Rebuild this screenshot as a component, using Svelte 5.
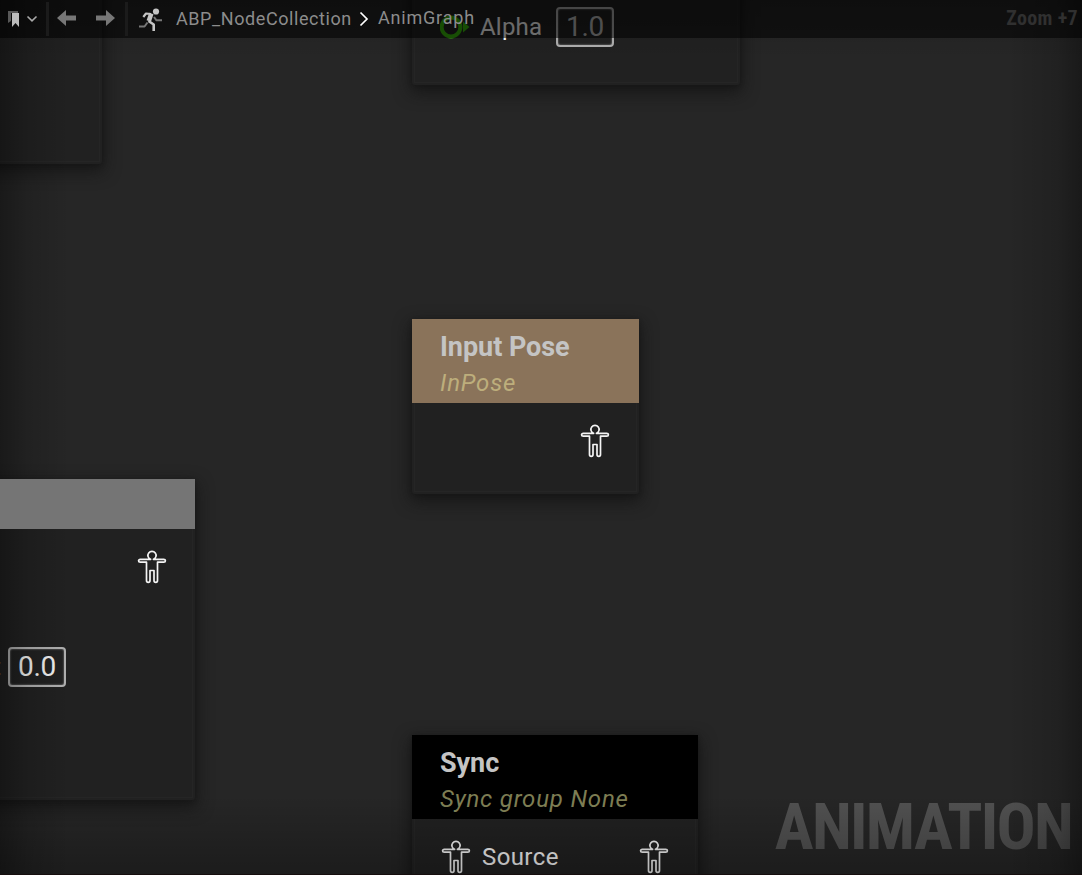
<script>
  const nodes = [
    { id: 'clip', x: -40, y: -40, w: 142, h: 204 },
    { id: 'alpha', x: 412, y: -80, w: 328, h: 165 },
    { id: 'pose', x: 412, y: 319, w: 227, h: 175, title: 'Input Pose', sub: 'InPose', tone: 'tan' },
    { id: 'gray', x: -60, y: 479, w: 255, h: 321, tone: 'gray' },
    { id: 'sync', x: 412, y: 735, w: 286, h: 180, title: 'Sync', sub: 'Sync group None', tone: 'black' }
  ];
</script>

{#snippet man()}
  <svg class="man" width="30" height="34" viewBox="0 0 30 34" fill="none" stroke="#f4f4f4" stroke-width="1.7" stroke-linejoin="round">
    <path d="M13.6 9.300A4.100 4.100 0 1 1 16.400 9.300H26.700C29 9.300 29 12.200 26.700 12.200H20.500V30.500C20.500 32.900 17 32.900 17 30.500V20.500H13V30.500C13 32.900 9.500 32.900 9.500 30.500V12.200H3.300C1 12.200 1 9.300 3.300 9.300Z" />
  </svg>
{/snippet}

<main>
  {#each nodes as n (n.id)}
    <section class="node" style="left:{n.x}px;top:{n.y}px;width:{n.w}px;height:{n.h}px">
      {#if n.tone}
        <header class={n.tone}>
          {#if n.title}
            <h2>{n.title}</h2>
            <p class={n.id}>{n.sub}</p>
          {/if}
        </header>
      {/if}
      {#if n.id === 'alpha'}
        <div class="row alpharow">
          <svg width="30" height="24" viewBox="0 0 30 24"><circle cx="11" cy="12" r="9.4" fill="none" stroke="#38b80c" stroke-width="4" /><path d="M23 6.500l6.500 5.500-6.500 5.500z" fill="#38b80c" /></svg>
          <span class="label">Alpha</span><span class="value">1.0</span>
        </div>
      {:else if n.id === 'pose'}
        <div class="row end">{@render man()}</div>
      {:else if n.id === 'gray'}
        <div class="row end near">{@render man()}</div>
        <div class="row zero"><span class="label">t</span><span class="value">0.0</span></div>
      {:else if n.id === 'sync'}
        <div class="row source">{@render man()}<span class="label">Source</span><i></i>{@render man()}</div>
      {/if}
    </section>
  {/each}

  <div class="watermark">ANIMATION</div>
  <div class="vignette"></div>

  <nav>
    <svg class="tools" width="170" height="38" viewBox="0 0 170 38">
      <path d="M8 11h10v2h-7v8l-3 2z" fill="#585858" />
      <path d="M12 13h7v14l-3.500-4-3.500 4z" fill="#bcbcbc" />
      <path d="M27.500 16.500l4.500 4.300 4.500-4.300" fill="none" stroke="#aaa" stroke-width="1.600" />
      <path d="M46 2h3v34h-3zM125 2h3v34h-3z" fill="#1b1b1b" />
      <path d="M57 18l9-8v5.500h10v5H66V26zM115 18l-9-8v5.500H96v5h10V26z" fill="#777" />
      <g fill="none" stroke-linejoin="round">
        <path d="M139 26.500h5.500l3-4M154 17l2.500 3.300h5.500" stroke="#777" stroke-width="2" />
        <path d="M143.300 17l2.700-3.500 5 .5" stroke="#c5c5c5" stroke-width="2.200" />
        <path d="M151.300 13.500l-2.500 7.500" stroke="#c5c5c5" stroke-width="4.600" />
        <path d="M148.500 21l5.200 3.500v6.500" stroke="#c5c5c5" stroke-width="2.600" />
      </g>
      <circle cx="156" cy="11.500" r="3.100" fill="#c5c5c5" />
    </svg>
    <span class="crumb one">ABP_NodeCollection</span>
    <svg class="sep" width="12" height="16" viewBox="0 0 12 16"><path d="M2.500 1.500l6.500 6.500-6.500 6.500" fill="none" stroke="#fff" stroke-width="1.700" /></svg>
    <span class="crumb two">AnimGraph</span>
    <span class="zoom">Zoom +7</span>
  </nav>
</main>

<style>
  :global(body) { margin: 0; background: #262626; }
  main { position: relative; width: 1082px; height: 875px; overflow: hidden; background: #262626; font-family: Roboto, sans-serif; }
  h2, p { margin: 0; font-weight: 400; white-space: nowrap; }
  svg { display: block; flex: none; }
  .node { position: absolute; box-sizing: border-box; background: #212121; box-shadow: 0 6px 16px 2px #111a, 0 1px 4px #1116; border-radius: 3px; }
  .node::after { content: ''; position: absolute; inset: 0 2px 2px; border: 1px solid #ffffff05; z-index: 0; }
  header { position: relative; z-index: 1; box-sizing: border-box; height: 84px; padding: 11px 28px 0; }
  .tan { background: #8a735a; }
  .gray { background: #757575; height: 50px; }
  .black { background: #000; }
  h2 { font-size: 27px; line-height: 34px; font-weight: 700; letter-spacing: -.05px; color: #c4c4c4; }
  p { margin-top: 1px; font-size: 24px; line-height: 36px; font-style: italic; letter-spacing: .8px; color: #bdae7c; }
  p.sync { color: #7d7d53; }
  .row { display: flex; align-items: center; }
  .end { justify-content: flex-end; padding: 21px 29px 0 0; }
  .near { padding-right: 28px; }
  .label { font-size: 24px; line-height: 30px; letter-spacing: .4px; color: #e8e8e8; }
  .value { box-sizing: border-box; width: 58px; height: 40px; border: 2px solid #b0b0b0; border-radius: 4px; font-size: 28px; line-height: 35px; letter-spacing: -.3px; text-align: center; color: #f0f0f0; box-shadow: inset 0 0 2px #999; }
  .alpharow { padding: 87px 0 0 28px; }
  .alpharow .label { width: 76px; margin-left: 10px; letter-spacing: .2px; color: #fff; }
  .alpharow .value { color: #bbb; }
  .zero { padding: 63px 0 0 53px; }
  .zero .label { width: 15px; color: #aaa; }
  .source { padding: 21px 29px 0; }
  .source .label { margin-left: 11px; color: #f4f4f4; }
  .source i { flex: 1; }
  .watermark { position: absolute; right: 10px; bottom: 10px; font-family: "Roboto Condensed", Roboto, sans-serif; font-stretch: 75%; font-weight: 700; font-size: 65px; line-height: 76px; letter-spacing: -1.750px; color: #515151; }
  .vignette { position: absolute; inset: 0; background: linear-gradient(90deg, #0005, #0002 28px, #0000 70px, #0000 1007px, #0002 1057px, #0005), linear-gradient(#0002, #0000 60px, #0000 795px, #0004 875px); box-shadow: inset 0 -1px #160e0e; }
  nav { position: absolute; inset: 0 0 auto; height: 38px; display: flex; background: #0000008c; }
  .crumb { font-size: 18px; line-height: 37px; letter-spacing: .58px; color: #8c8c8c; white-space: nowrap; }
  .one { width: 182px; margin-left: 6px; }
  .sep { margin-top: 11px; }
  .two { margin-left: 8px; line-height: 35px; letter-spacing: .8px; }
  .zoom { margin: 0 4px 0 auto; font-family: "Roboto Condensed", Roboto, sans-serif; font-stretch: 75%; font-weight: 700; font-size: 20px; line-height: 36px; letter-spacing: .35px; color: #303030; }
</style>
